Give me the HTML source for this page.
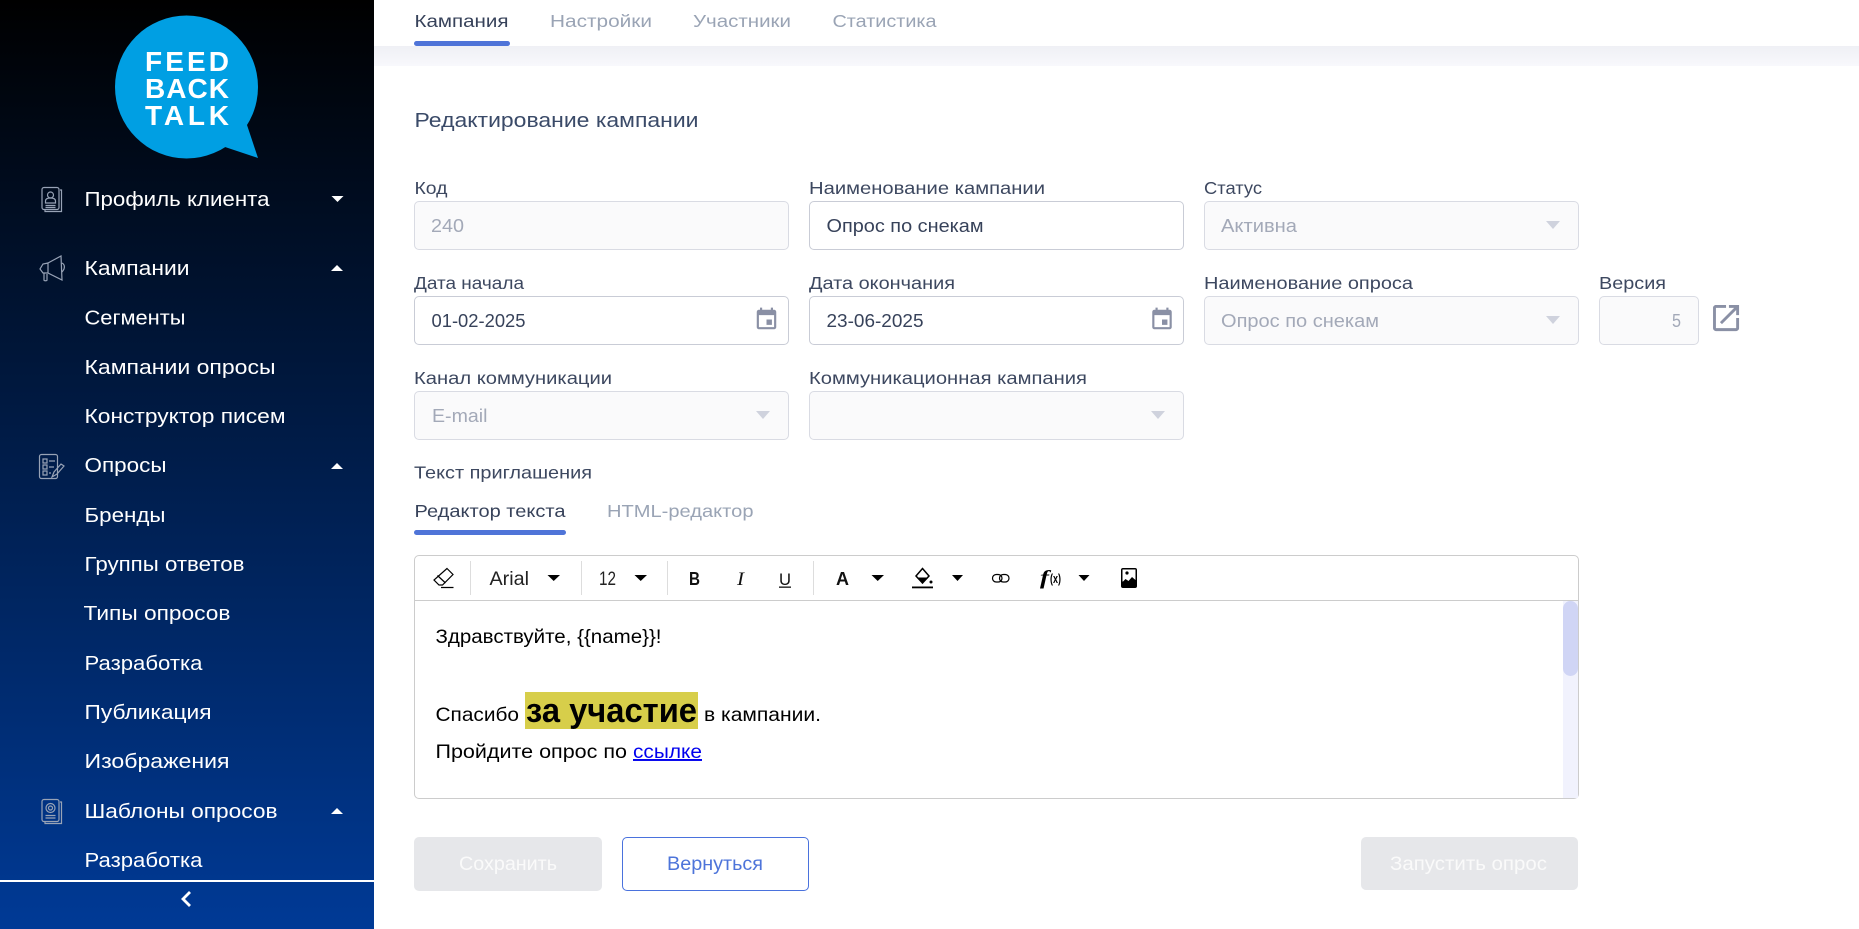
<!DOCTYPE html>
<html lang="ru"><head><meta charset="utf-8"><title>Редактирование кампании</title>
<style>
html,body{margin:0;padding:0;width:1859px;height:929px;overflow:hidden;background:#fff}
.a{position:absolute;box-sizing:border-box}
aside{position:absolute;left:0;top:0;width:374px;height:929px;background:linear-gradient(180deg,#000 0%,#003a96 100%)}
.band{left:374px;top:46px;width:1485px;height:20px;background:linear-gradient(180deg,#eff0f5,#f8f8fc)}
.f{border:1px solid #c9ccd6;border-radius:5px;background:#fff}
.d{border-color:#d9dbe3;background:#fafafb}
svg{position:absolute;left:0;top:0}
text{font-family:"Liberation Sans",sans-serif}
.m text{font-size:20.500px;fill:#fff}
.l{font-size:17.500px;fill:#3d4860}
.g{font-size:18px;fill:#a3a9b8}
.v{font-size:18px;fill:#37425a}
.t{font-size:17.500px;fill:#9aa4b5}
.e{font-size:19.500px;fill:#000}
.c{fill:#000}
.dc{fill:#cfd2dd}
.wc{fill:#fff}
.ic{fill:none;stroke:#98a3b6;stroke-width:1.2}
</style></head><body>
<aside></aside>
<div class="a band"></div>
<div class="a" style="left:414px;top:41px;width:96px;height:5px;background:#4f74d8;border-radius:3px"></div>

<div class="a f d" style="left:414px;top:201px;width:375px;height:49px"></div>
<div class="a f" style="left:809px;top:201px;width:375px;height:49px"></div>
<div class="a f d" style="left:1204px;top:201px;width:375px;height:49px"></div>
<div class="a f" style="left:414px;top:296px;width:375px;height:49px"></div>
<div class="a f" style="left:809px;top:296px;width:375px;height:49px"></div>
<div class="a f d" style="left:1204px;top:296px;width:375px;height:49px"></div>
<div class="a f d" style="left:1599px;top:296px;width:100px;height:49px"></div>
<div class="a f d" style="left:414px;top:391px;width:375px;height:49px"></div>
<div class="a f d" style="left:809px;top:391px;width:375px;height:49px"></div>

<div class="a" style="left:414px;top:530px;width:152px;height:5px;background:#4f74d8;border-radius:3px"></div>

<div class="a" style="left:414px;top:555px;width:1165px;height:244px;border:1px solid #ccc;border-radius:5px;background:#fff"></div>
<div class="a" style="left:415px;top:600px;width:1163px;height:1px;background:#ccc"></div>
<div class="a" style="left:1563px;top:601px;width:15px;height:197px;background:#f1f2fd"></div>
<div class="a" style="left:1563px;top:601px;width:15px;height:75px;background:#d0d5f5;border-radius:8px"></div>
<div class="a" style="left:525px;top:692px;width:173px;height:37px;background:#d7ce4a"></div>

<div class="a" style="left:414px;top:837px;width:188px;height:54px;background:#e6e7ea;border-radius:5px"></div>
<div class="a" style="left:622px;top:837px;width:187px;height:54px;border:1px solid #4a72dd;border-radius:5px"></div>
<div class="a" style="left:1361px;top:837px;width:217px;height:53px;background:#e6e7ea;border-radius:5px"></div>

<svg width="1859" height="929" viewBox="0 0 1859 929" xmlns="http://www.w3.org/2000/svg">
<!-- logo -->
<circle cx="186.500" cy="87" r="71.500" fill="#009fe3"/>
<polygon points="246,122 258,158 222,146" fill="#009fe3"/>
<g>
<text x="145" y="71" textLength="84" lengthAdjust="spacing" style="font-size:28px;font-weight:700;fill:#fff">FEED</text>
<text x="145" y="98" textLength="84" lengthAdjust="spacing" style="font-size:28px;font-weight:700;fill:#fff">BACK</text>
<text x="145" y="125" textLength="84" lengthAdjust="spacing" style="font-size:28px;font-weight:700;fill:#fff">TALK</text>
</g>

<!-- sidebar -->
<g class="m">
<text x="84.500" y="206" textLength="185" lengthAdjust="spacingAndGlyphs">Профиль клиента</text>
<text x="84.500" y="275" textLength="105" lengthAdjust="spacingAndGlyphs">Кампании</text>
<text x="84.500" y="324.500" textLength="101" lengthAdjust="spacingAndGlyphs">Сегменты</text>
<text x="84.500" y="374" textLength="191" lengthAdjust="spacingAndGlyphs">Кампании опросы</text>
<text x="84.500" y="423" textLength="201" lengthAdjust="spacingAndGlyphs">Конструктор писем</text>
<text x="84.500" y="472" textLength="82" lengthAdjust="spacingAndGlyphs">Опросы</text>
<text x="84.500" y="522" textLength="81" lengthAdjust="spacingAndGlyphs">Бренды</text>
<text x="84.500" y="571" textLength="160" lengthAdjust="spacingAndGlyphs">Группы ответов</text>
<text x="83.500" y="620" textLength="147" lengthAdjust="spacingAndGlyphs">Типы опросов</text>
<text x="84.500" y="670" textLength="118" lengthAdjust="spacingAndGlyphs">Разработка</text>
<text x="84.500" y="719" textLength="127" lengthAdjust="spacingAndGlyphs">Публикация</text>
<text x="84.500" y="768" textLength="145" lengthAdjust="spacingAndGlyphs">Изображения</text>
<text x="84.500" y="818" textLength="193" lengthAdjust="spacingAndGlyphs">Шаблоны опросов</text>
<text x="84.500" y="867" textLength="118" lengthAdjust="spacingAndGlyphs">Разработка</text>
</g>
<polygon class="wc" points="331.500,196 343.500,196 337.500,202"/>
<polygon class="wc" points="331,271 343,271 337,265"/>
<polygon class="wc" points="331,469 343,469 337,463"/>
<polygon class="wc" points="331,814 343,814 337,808"/>
<rect x="0" y="880" width="374" height="2" fill="#fff"/>
<path d="M190 892l-7 7 7 7" fill="none" stroke="#fff" stroke-width="2.800"/>

<!-- sidebar icons -->
<g class="ic">
<rect x="42" y="187.500" width="17" height="22" rx="2"/>
<path d="M60 190h1.500v21.500H45v-1.500"/>
<circle cx="50.500" cy="195" r="3"/>
<path d="M45.500 203v-2c0-2 2-3 5-3s5 1 5 3v2zM45.500 205.500h10M45.500 207.500h10"/>
<path d="M48 263l13-7 1 24-14-7zM48 263l-5 1-3 5 3 4h5M48 263v10M62 263c2 1 3 3 2 6-.5 1-1 2-2 3M44 273v7c0 1 3 1 3 0v-6"/>
<rect x="39.500" y="454.500" width="18" height="24" rx="2"/>
<path d="M43 459h4v4h-4zM43 465h4v4h-4zM43 471h4v4h-4zM49 461h6M49 467h5M49 473h2M52 477l2-5 7-8 3 2-7 8z"/>
<rect x="42" y="799.500" width="17" height="22" rx="2"/>
<path d="M60 802h1.500v21.500H45V822"/>
<circle cx="50.500" cy="808" r="4.500"/>
<circle cx="50.500" cy="808" r="2"/>
<path d="M45.500 815.500h10M45.500 818h10"/>
</g>

<!-- top tabs -->
<text x="414.500" y="27" textLength="94" lengthAdjust="spacingAndGlyphs" style="font-size:17.500px;fill:#37425a">Кампания</text>
<text class="t" x="550" y="27" textLength="102" lengthAdjust="spacingAndGlyphs">Настройки</text>
<text class="t" x="693" y="27" textLength="98" lengthAdjust="spacingAndGlyphs">Участники</text>
<text class="t" x="832.500" y="27" textLength="104" lengthAdjust="spacingAndGlyphs">Статистика</text>

<text x="414.500" y="127" textLength="284" lengthAdjust="spacingAndGlyphs" style="font-size:20.500px;fill:#3a4a68">Редактирование кампании</text>

<!-- labels -->
<text class="l" x="414.500" y="194" textLength="33" lengthAdjust="spacingAndGlyphs">Код</text>
<text class="l" x="809" y="194" textLength="236" lengthAdjust="spacingAndGlyphs">Наименование кампании</text>
<text class="l" x="1204" y="194" textLength="58" lengthAdjust="spacingAndGlyphs">Статус</text>
<text class="l" x="414" y="289" textLength="110" lengthAdjust="spacingAndGlyphs">Дата начала</text>
<text class="l" x="809" y="289" textLength="146" lengthAdjust="spacingAndGlyphs">Дата окончания</text>
<text class="l" x="1204" y="289" textLength="209" lengthAdjust="spacingAndGlyphs">Наименование опроса</text>
<text class="l" x="1599" y="289" textLength="67" lengthAdjust="spacingAndGlyphs">Версия</text>
<text class="l" x="414" y="384" textLength="198" lengthAdjust="spacingAndGlyphs">Канал коммуникации</text>
<text class="l" x="809" y="384" textLength="278" lengthAdjust="spacingAndGlyphs">Коммуникационная кампания</text>
<text class="l" x="414" y="478.500" textLength="178" lengthAdjust="spacingAndGlyphs">Текст приглашения</text>

<!-- values -->
<text class="g" x="431" y="232" textLength="33" lengthAdjust="spacingAndGlyphs">240</text>
<text class="v" x="826.500" y="232" textLength="157" lengthAdjust="spacingAndGlyphs">Опрос по снекам</text>
<text class="g" x="1221" y="232" textLength="76" lengthAdjust="spacingAndGlyphs">Активна</text>
<text class="v" x="431.500" y="327" textLength="94" lengthAdjust="spacingAndGlyphs">01-02-2025</text>
<text class="v" x="826.500" y="327" textLength="97" lengthAdjust="spacingAndGlyphs">23-06-2025</text>
<text class="g" x="1221" y="327" textLength="158" lengthAdjust="spacingAndGlyphs">Опрос по снекам</text>
<text class="g" x="1672" y="327" textLength="9" lengthAdjust="spacingAndGlyphs">5</text>
<text class="g" x="432" y="422" textLength="55.500" lengthAdjust="spacingAndGlyphs">E-mail</text>

<polygon class="dc" points="1546,221 1560,221 1553,229"/>
<polygon class="dc" points="1546,316 1560,316 1553,324"/>
<polygon class="dc" points="756,411 770,411 763,419"/>
<polygon class="dc" points="1151,411 1165,411 1158,419"/>

<svg x="753.500" y="306.500" width="26" height="26" viewBox="0 0 24 24" fill="#8a90a5"><path d="M17 12h-5v5h5v-5zM16 1v2H8V1H6v2H5c-1.110 0-1.990.900-1.990 2L3 19c0 1.100.890 2 2 2h14c1.100 0 2-.900 2-2V5c0-1.100-.900-2-2-2h-1V1h-2zm3 18H5V8h14v11z"/></svg>
<svg x="1149" y="306.500" width="26" height="26" viewBox="0 0 24 24" fill="#8a90a5"><path d="M17 12h-5v5h5v-5zM16 1v2H8V1H6v2H5c-1.110 0-1.990.900-1.990 2L3 19c0 1.100.890 2 2 2h14c1.100 0 2-.900 2-2V5c0-1.100-.900-2-2-2h-1V1h-2zm3 18H5V8h14v11z"/></svg>
<svg x="1708.700" y="300.700" width="34.700" height="34.700" viewBox="0 0 24 24" fill="#8a90a5"><path d="M19 19H5V5h7V3H5c-1.110 0-2 .900-2 2v14c0 1.100.890 2 2 2h14c1.100 0 2-.900 2-2v-7h-2v7zM14 3v2h3.590l-9.830 9.830 1.410 1.410L19 6.410V10h2V3h-7z"/></svg>

<!-- editor tabs -->
<text x="414.500" y="517" textLength="151" lengthAdjust="spacingAndGlyphs" style="font-size:17.500px;fill:#37425a">Редактор текста</text>
<text class="t" x="607" y="517" textLength="146.500" lengthAdjust="spacingAndGlyphs">HTML-редактор</text>

<!-- toolbar -->
<g fill="#ddd">
<rect x="470" y="561" width="1" height="34"/><rect x="581" y="561" width="1" height="34"/><rect x="667" y="561" width="1" height="34"/><rect x="813" y="561" width="1" height="34"/>
</g>
<path d="M447 568.500l6 6-10.500 10.500h-3.500l-5-5zM437.500 575.500l8 7.500M441 587.500h12.500" fill="none" stroke="#000" stroke-width="1.200"/>
<text x="489.500" y="585" textLength="39.500" lengthAdjust="spacingAndGlyphs" style="font-size:19.500px;fill:#222">Arial</text>
<polygon class="c" points="547.500,575 560,575 553.700,581"/>
<text x="599" y="585" textLength="17" lengthAdjust="spacingAndGlyphs" style="font-size:19.500px;fill:#222">12</text>
<polygon class="c" points="634.500,575 647,575 640.700,581"/>
<text x="689" y="585" textLength="11" lengthAdjust="spacingAndGlyphs" style="font-size:18.500px;font-weight:700;fill:#111">B</text>
<text x="737" y="585" textLength="7" lengthAdjust="spacingAndGlyphs" style="font-family:'Liberation Serif',serif;font-size:19px;font-style:italic;fill:#111">I</text>
<text x="779" y="585" textLength="12" lengthAdjust="spacingAndGlyphs" style="font-size:17px;fill:#111">U</text>
<rect x="779" y="586.500" width="12" height="1.300" fill="#111"/>
<text x="836" y="585" textLength="13" lengthAdjust="spacingAndGlyphs" style="font-size:18px;font-weight:700;fill:#111">A</text>
<polygon class="c" points="871.500,575 884,575 877.700,581"/>
<path d="M922.500 568.500l6.500 7.500-6.500 7-6.500-7z" fill="none" stroke="#000" stroke-width="1.500"/>
<path d="M916.500 577.500h12l-6 6z" fill="#000"/>
<circle cx="931" cy="582" r="1.500" fill="#000"/>
<rect x="912" y="586.500" width="21" height="1.800" fill="#000"/>
<polygon class="c" points="952,575 963,575 957.500,581"/>
<rect x="992.500" y="574.500" width="9.500" height="7.500" rx="3.700" fill="none" stroke="#000" stroke-width="1.200"/>
<rect x="999.500" y="574.500" width="9.500" height="7.500" rx="3.700" fill="none" stroke="#000" stroke-width="1.200"/>
<text x="1040" y="584" textLength="9" lengthAdjust="spacingAndGlyphs" style="font-family:'Liberation Serif',serif;font-size:20px;font-weight:700;font-style:italic;fill:#000">f</text>
<text x="1050" y="583" textLength="11" lengthAdjust="spacingAndGlyphs" style="font-size:12.500px;font-weight:700;fill:#000">(x)</text>
<polygon class="c" points="1078.500,575 1089.500,575 1084,581"/>
<rect x="1121" y="568" width="16" height="20" rx="2" fill="#000"/>
<rect x="1122.500" y="569.500" width="13" height="12" fill="#fff"/>
<path d="M1122.500 582l3-3 3 2 3.500-4 3.500 3v6h-13z" fill="#000"/>
<circle cx="1127" cy="573" r="1.600" fill="#000"/>

<!-- editor text -->
<text class="e" x="435.500" y="643" textLength="226" lengthAdjust="spacingAndGlyphs">Здравствуйте, {{name}}!</text>
<text class="e" x="435.500" y="721" textLength="83.500" lengthAdjust="spacingAndGlyphs">Спасибо</text>
<text x="526" y="722" textLength="171" lengthAdjust="spacingAndGlyphs" style="font-size:34px;font-weight:700;fill:#000">за участие</text>
<text class="e" x="704" y="721" textLength="117" lengthAdjust="spacingAndGlyphs">в кампании.</text>
<text class="e" x="435.500" y="758" textLength="191.500" lengthAdjust="spacingAndGlyphs">Пройдите опрос по</text>
<text x="633" y="758" textLength="69" lengthAdjust="spacingAndGlyphs" style="font-size:19.500px;fill:#0000ee;text-decoration:underline">ссылке</text>

<!-- buttons -->
<text x="459" y="870" textLength="98" lengthAdjust="spacingAndGlyphs" style="font-size:19px;fill:#fafafa">Сохранить</text>
<text x="667" y="870" textLength="96" lengthAdjust="spacingAndGlyphs" style="font-size:19px;fill:#4d74da">Вернуться</text>
<text x="1390" y="870" textLength="157" lengthAdjust="spacingAndGlyphs" style="font-size:19px;fill:#fafafa">Запустить опрос</text>
</svg>
</body></html>
